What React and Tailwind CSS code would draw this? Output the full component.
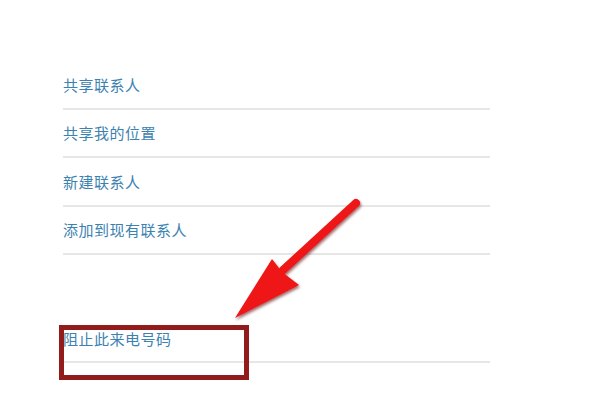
import React from 'react';

const items = ['共享联系人', '共享我的位置', '新建联系人', '添加到现有联系人'];

const font = { fontFamily: '"Noto Sans CJK SC", "Noto Sans", sans-serif' };

const Row = ({ label }) => (
    <div className="h-[48.5px] flex items-center border-b-2 border-[#e6e6e6]">
        <span className="text-[15px] tracking-[0.5px] text-[#3c82b0] leading-none">{label}</span>
    </div>
);

const App = () => {
    return (
        <div className="relative w-[600px] h-[400px] bg-white overflow-hidden" style={font}>
            <div className="pt-[61px] pl-[63px] w-[490px]">
                {items.map((label) => (
                    <Row key={label} label={label} />
                ))}
                <div className="h-[60px]"></div>
                <div className="h-[48px] flex items-start pt-[16px] border-b-2 border-[#e6e6e6]">
                    <span className="text-[15px] tracking-[0.5px] text-[#3c82b0] leading-none">阻止此来电号码</span>
                </div>
            </div>

            {/* red frame around the block option */}
            <div className="absolute left-[59px] top-[325px] w-[190px] h-[55px] border-[5px] border-[#921c1c]"></div>

            {/* arrow */}
            <svg className="absolute left-0 top-0" width="600" height="400" viewBox="0 0 600 400">
                <defs>
                    <filter id="sh" x="-20%" y="-20%" width="140%" height="140%">
                        <feDropShadow dx="1" dy="2" stdDeviation="1.5" floodColor="#5a0000" floodOpacity="0.6" />
                    </filter>
                </defs>
                <g filter="url(#sh)">
                    <line x1="356" y1="203" x2="283" y2="270" stroke="#ee1414" strokeWidth="8" strokeLinecap="round" />
                    <polygon points="235,318 272,259 282,272 299,285" fill="#ee1414" />
                </g>
            </svg>
        </div>
    );
};

export default App;
